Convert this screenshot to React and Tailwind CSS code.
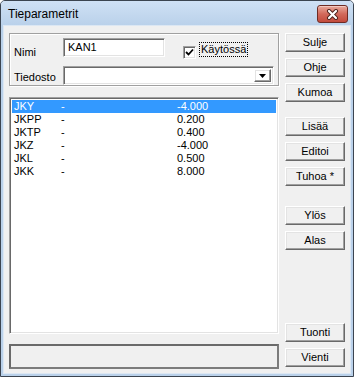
import React from 'react'

const rows = [
  ['JKY', '-', '-4.000'],
  ['JKPP', '-', '0.200'],
  ['JKTP', '-', '0.400'],
  ['JKZ', '-', '-4.000'],
  ['JKL', '-', '0.500'],
  ['JKK', '-', '8.000'],
]

const raised = 'border border-t-white border-l-white border-r-[#696969] border-b-[#696969] shadow-[inset_-1px_-1px_0_#a0a0a0,inset_1px_1px_0_#e3e3e3]'
const sunken = 'border border-t-[#a0a0a0] border-l-[#a0a0a0] border-r-white border-b-white shadow-[inset_1px_1px_0_#696969,inset_-1px_-1px_0_#e3e3e3]'

const Btn = ({children, className = ''}) => (
  <div className={`h-[19px] w-[60px] flex items-center justify-center bg-[#f0f0f0] leading-[13px] ${raised} ${className}`}>
    {children}
  </div>
)

const CloseButton = () => (
  <div className="mt-[4px] mr-[5px] w-[31px] h-[18px] rounded-[3px] border border-[#6e2b24] bg-gradient-to-b from-[#e7a99c] via-[#d2695b] to-[#c24a3c] shadow-[inset_0_1px_0_#f3c9c0] flex items-center justify-center">
    <svg width="13" height="11" viewBox="0 0 13 11">
      <path d="M3 2 L10 9 M10 2 L3 9" stroke="#4a1f1a" strokeWidth="4" strokeLinecap="round"/>
      <path d="M3 2 L10 9 M10 2 L3 9" stroke="#ffffff" strokeWidth="2.2" strokeLinecap="round"/>
    </svg>
  </div>
)

export default function App() {
  return (
    <div className="w-[354px] h-[377px] bg-white" style={{fontFamily: '"Liberation Sans", Arial, sans-serif'}}>
      <div className="w-[354px] h-[377px] flex flex-col border border-[#3b4450] rounded-t-[5px] bg-[#bad1ea] text-black text-[11px]">
        {/* title bar */}
        <div className="h-[24px] flex items-start justify-between rounded-t-[4px] bg-gradient-to-b from-[#cfe1f5] to-[#bad1ea]">
          <div className="pl-[7px] mt-[6px] text-[12px] leading-[14px]">Tieparametrit</div>
          <CloseButton/>
        </div>

        {/* client area */}
        <div className="flex-1 mx-[2px] mb-[2px] border border-[#dce7f3] bg-[#f0f0f0] flex pl-[5px] pt-[7px]">
          <div className="w-[270px] flex flex-col">
            {/* top group */}
            <div className="h-[53px] border border-[#a0a0a0] shadow-[inset_1px_1px_0_#fff,1px_1px_0_#fff] flex flex-col pl-[4px]">
              <div className="h-[19px] mt-[4px] flex items-start">
                <div className="w-[49px] mt-[8px] leading-[13px]">Nimi</div>
                <div className={`w-[102px] h-[19px] bg-white pl-[4px] pt-[2px] leading-[13px] ${sunken}`}>KAN1</div>
                <div className={`ml-[18px] mt-[8px] w-[13px] h-[13px] bg-white flex items-center justify-center ${sunken}`}>
                  <svg width="9" height="9" viewBox="0 0 9 9">
                    <path d="M1 4 L3.5 6.5 L8 1.5" stroke="#000" strokeWidth="1.8" fill="none"/>
                  </svg>
                </div>
                <div className="ml-[3px] mt-[4px] px-[1px] border border-dotted border-black leading-[13px]">Käytössä</div>
              </div>
              <div className="h-[19px] mt-[9px] flex items-start">
                <div className="w-[49px] mt-[5px] leading-[13px]">Tiedosto</div>
                <div className={`w-[211px] h-[19px] bg-white flex justify-end p-[2px] ${sunken}`}>
                  <div className={`w-[17px] h-full flex items-center justify-center ${raised}`}>
                    <svg width="7" height="4" viewBox="0 0 7 4">
                      <path d="M0 0 H7 L3.5 4 Z" fill="#000"/>
                    </svg>
                  </div>
                </div>
              </div>
            </div>

            {/* list */}
            <div className={`mt-[11px] h-[237px] bg-white p-[2px] ${sunken}`}>
              {rows.map((r, i) => (
                <div key={i} className={`h-[13px] flex leading-[13px] pl-[2px] ${i === 0 ? 'bg-[#3399ff] text-white' : ''}`}>
                  <div className="w-[47px]">{r[0]}</div>
                  <div className="w-[116px]">{r[1]}</div>
                  <div>{r[2]}</div>
                </div>
              ))}
            </div>

            {/* status */}
            <div className="mt-[10px] h-[25px] border-2 border-t-[#6a6a6a] border-l-[#6a6a6a] border-r-[#7c7c7c] border-b-[#7c7c7c] bg-[#f0f0f0]"></div>
          </div>

          {/* buttons */}
          <div className="ml-[6px] w-[60px] flex flex-col">
            <Btn>Sulje</Btn>
            <Btn className="mt-[6px]">Ohje</Btn>
            <Btn className="mt-[6px]">Kumoa</Btn>
            <Btn className="mt-[15px]">Lisää</Btn>
            <Btn className="mt-[6px]">Editoi</Btn>
            <Btn className="mt-[6px]">Tuhoa *</Btn>
            <Btn className="mt-[20px]">Ylös</Btn>
            <Btn className="mt-[6px]">Alas</Btn>
            <Btn className="mt-[73px]">Tuonti</Btn>
            <Btn className="mt-[6px]">Vienti</Btn>
          </div>
        </div>
      </div>
    </div>
  )
}
